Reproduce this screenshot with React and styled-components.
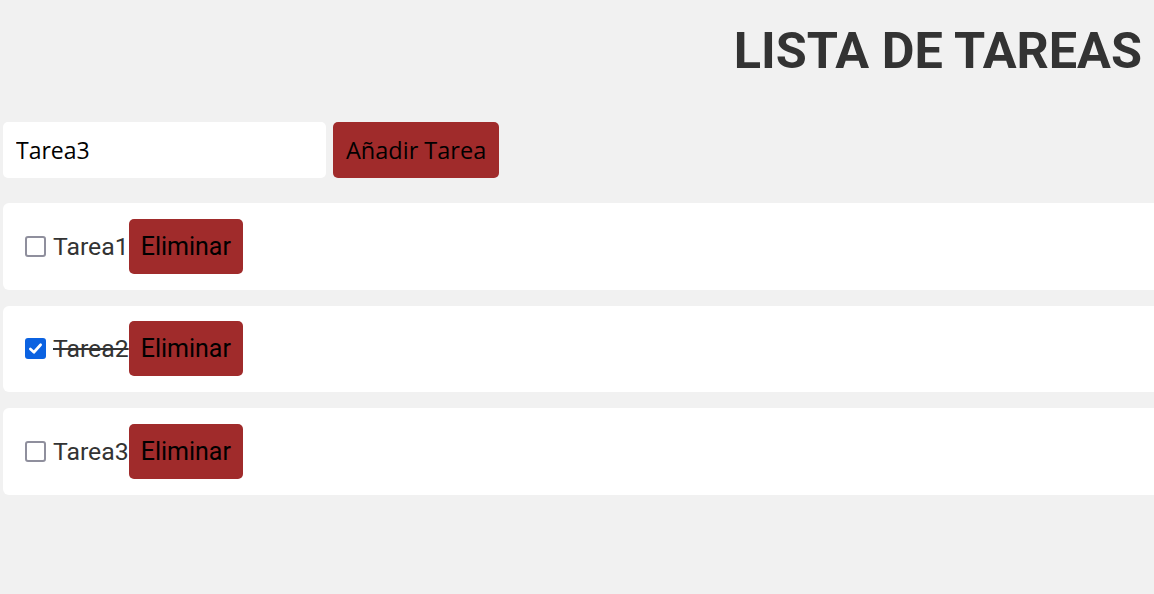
import React, { useState } from "react";
import styled, { createGlobalStyle } from "styled-components";

const Global = createGlobalStyle`
  html, body { margin: 0; padding: 0; background: #f1f1f1; overflow: hidden; }
  body { font-family: Roboto, "Noto Sans", sans-serif; }
`;

const Page = styled.div`
  padding: 0 0 0 3px;
`;

const Header = styled.header`
  display: flex;
  justify-content: flex-end;
  padding: 21px 12px 0 0;
`;

const Title = styled.h1`
  margin: 0;
  font-family: Roboto, sans-serif;
  font-weight: 700;
  font-size: 50.4px;
  line-height: 60px;
  color: #333333;
`;

const Form = styled.form`
  display: flex;
  gap: 7px;
  margin-top: 41px;
`;

const Input = styled.input`
  width: 323px;
  height: 56px;
  box-sizing: border-box;
  border: none;
  border-radius: 5px;
  background: #ffffff;
  padding: 0 13px;
  font-family: "Open Sans", "Noto Sans", sans-serif;
  font-size: 23px;
  color: #000;
  outline: none;
`;

const Button = styled.button`
  height: ${(p) => p.$h || 56}px;
  box-sizing: border-box;
  border: none;
  border-radius: 5px;
  background: #a02b2b;
  color: #000;
  padding: 0 ${(p) => p.$px || 13}px;
  font-family: ${(p) => p.$font || '"Open Sans", "Noto Sans", sans-serif'};
  font-size: ${(p) => p.$fs || 23}px;
  cursor: pointer;
`;

const List = styled.ul`
  list-style: none;
  margin: 25px -30px 0 0;
  padding: 0;
  display: flex;
  flex-direction: column;
  gap: 16px;
`;

const Item = styled.li`
  display: flex;
  align-items: center;
  height: 86.5px;
  box-sizing: border-box;
  padding: 0 18px;
  background: #ffffff;
  border-radius: 6px;
`;

const CheckWrap = styled.label`
  position: relative;
  display: inline-flex;
  width: 21px;
  height: 21px;
  margin: 0 7px 0 4px;
  cursor: pointer;
`;

const HiddenInput = styled.input`
  position: absolute;
  opacity: 0;
  width: 100%;
  height: 100%;
  margin: 0;
`;

const Box = styled.span`
  width: 21px;
  height: 21px;
  box-sizing: border-box;
  border-radius: 3px;
  border: ${(p) => (p.$on ? "none" : "2.5px solid #8f8f9d")};
  background: ${(p) => (p.$on ? "#0b62e1" : "#fff")};
  display: flex;
  align-items: center;
  justify-content: center;
`;

const Label = styled.span`
  font-family: Roboto, sans-serif;
  font-size: 24.8px;
  color: #333;
  text-decoration: ${(p) => (p.$done ? "line-through" : "none")};
`;

export default function App() {
  const [tasks, setTasks] = useState([
    { id: 1, text: "Tarea1", done: false },
    { id: 2, text: "Tarea2", done: true },
    { id: 3, text: "Tarea3", done: false },
  ]);
  const [value, setValue] = useState("Tarea3");
  return (
    <>
      <Global />
      <Page>
        <Header>
          <Title>LISTA DE TAREAS</Title>
        </Header>
        <Form onSubmit={(e) => e.preventDefault()}>
          <Input value={value} onChange={(e) => setValue(e.target.value)} />
          <Button type="submit" $fs={23.5}>Añadir Tarea</Button>
        </Form>
        <List>
          {tasks.map((t) => (
            <Item key={t.id}>
              <CheckWrap>
                <HiddenInput
                  type="checkbox"
                  checked={t.done}
                  onChange={() =>
                    setTasks(tasks.map((x) => (x.id === t.id ? { ...x, done: !x.done } : x)))
                  }
                />
                <Box $on={t.done}>
                  {t.done && (
                    <svg width="15" height="15" viewBox="0 0 16 16">
                      <path
                        d="M2.5 8.5 L6.3 12 L13.5 4"
                        fill="none"
                        stroke="#fff"
                        strokeWidth="2.8"
                        strokeLinecap="round"
                        strokeLinejoin="round"
                      />
                    </svg>
                  )}
                </Box>
              </CheckWrap>
              <Label $done={t.done}>{t.text}</Label>
              <Button $h={55} $fs={25} $px={12} $font="Roboto, sans-serif">
                Eliminar
              </Button>
            </Item>
          ))}
        </List>
      </Page>
    </>
  );
}
